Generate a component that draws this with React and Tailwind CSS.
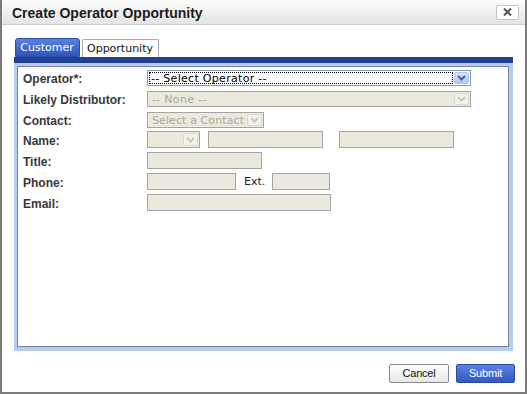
import React from "react";

function Chevron({ color = "#4a5f8a", w = 9, h = 6, sw = 2 }) {
  return (
    <svg width={w} height={h} viewBox="0 0 9 6">
      <path d="M1 1 L4.5 4.5 L8 1" fill="none" stroke={color} strokeWidth={sw} />
    </svg>
  );
}

function DisabledSelect({ width, text, track }) {
  return (
    <div className={`${width} h-[16px] border border-[#a5a5a5] bg-[#ebe9dd] flex items-stretch p-[1px]`}>
      <div className={`flex-1 flex items-center pl-[3px] text-[11px] leading-none ${track} text-[#aca899] font-['DejaVu_Sans',sans-serif] whitespace-nowrap overflow-hidden`}>
        {text}
      </div>
      <div className="w-[15px] ml-[1px] bg-[#f2f1ea] border border-[#dcdad0] rounded-[2px] flex items-center justify-center">
        <Chevron color="#c9c7bd" />
      </div>
    </div>
  );
}

function Input({ width }) {
  return <div className={`${width} h-[17px] border border-[#a5a5a5] bg-[#ebe9dd]`} />;
}

function Label({ children }) {
  return (
    <div className="w-[124px] shrink-0 pt-[2px] text-[12px] font-bold text-[#383838] font-['Liberation_Sans',sans-serif] leading-none">
      {children}
    </div>
  );
}

export default function App() {
  return (
    <div className="w-[527px] h-[394px] bg-white border-x-2 border-b-2 border-[#7b7b7b] flex flex-col font-['Liberation_Sans',sans-serif] overflow-hidden">
      {/* Title bar */}
      <div className="h-[25px] shrink-0 flex items-center justify-between border-b border-[#cdcdcd] bg-gradient-to-b from-[#fdfdfd] to-[#e4e4e4]">
        <span className="pl-[10px] pt-[1px] text-[14px] font-bold text-[#1c1c1c] leading-none">
          Create Operator Opportunity
        </span>
        <div className="mr-[6px] w-[23px] h-[15px] bg-white border border-[#c4c4c4] rounded-[2px] flex items-center justify-center">
          <svg width="9" height="8" viewBox="0 0 9 8">
            <path d="M1 0.5 L8 7.5 M8 0.5 L1 7.5" stroke="#555" strokeWidth="2" />
          </svg>
        </div>
      </div>

      {/* Tabs + panel */}
      <div className="px-[12px] pt-[13px] shrink-0">
        <div className="h-[19px] flex items-end gap-[2px] pl-[0.5px]">
          <div className="h-[19px] w-[65px] rounded-t-[3px] border border-[#2b4ca6] bg-gradient-to-b from-[#5a82db] to-[#2f55bc] flex items-center justify-center text-[11px] leading-none text-white font-['DejaVu_Sans',sans-serif]">
            Customer
          </div>
          <div className="h-[18px] w-[77px] rounded-t-[2px] border border-b-0 border-[#a9a9a9] bg-white flex items-center justify-center text-[11px] leading-none text-[#111] font-['DejaVu_Sans',sans-serif]">
            Opportunity
          </div>
        </div>
        <div className="h-[6px] bg-[#213f97]" />
        <div className="bg-[#b6ccf3] pl-[3px] pr-[4px] pt-[3px] pb-[4px]">
          <div className="h-[281px] border border-[#7c8591] bg-white pl-[5px] pt-[3px] flex flex-col">
            {/* Operator */}
            <div className="flex items-center h-[16px]">
              <Label>Operator*:</Label>
              <div className="w-[324px] h-[16px] border border-[#7f9db9] bg-white flex items-stretch p-[1px]">
                <div className="flex-1 border border-dotted border-black flex items-center pl-[1px] text-[11px] leading-none tracking-[0.3px] text-black font-['DejaVu_Sans',sans-serif] whitespace-nowrap">
                  -- Select Operator --
                </div>
                <div className="w-[15px] ml-[1px] bg-gradient-to-b from-[#d9e4fc] to-[#b2c6f3] border border-[#b4c6ee] rounded-[2px] flex items-center justify-center">
                  <Chevron color="#4b5f8c" />
                </div>
              </div>
            </div>
            {/* Likely Distributor */}
            <div className="flex items-center h-[16px] mt-[5px]">
              <Label>Likely Distributor:</Label>
              <DisabledSelect width="w-[324px]" text="-- None --" track="tracking-[0.3px]" />
            </div>
            {/* Contact */}
            <div className="flex items-center h-[16px] mt-[5px]">
              <Label>Contact:</Label>
              <DisabledSelect width="w-[117px]" text="Select a Contact" track="tracking-[0.1px]" />
            </div>
            {/* Name */}
            <div className="flex items-center h-[17px] mt-[3px]">
              <Label>Name:</Label>
              <div className="w-[53px] h-[17px] border border-[#a5a5a5] bg-[#ebe9dd] flex items-stretch justify-end p-[1px]">
                <div className="w-[15px] bg-[#f2f1ea] border border-[#dcdad0] rounded-[2px] flex items-center justify-center">
                  <Chevron color="#c9c7bd" />
                </div>
              </div>
              <div className="ml-[8px]">
                <Input width="w-[115px]" />
              </div>
              <div className="ml-[16px]">
                <Input width="w-[115px]" />
              </div>
            </div>
            {/* Title */}
            <div className="flex items-center h-[17px] mt-[4px]">
              <Label>Title:</Label>
              <Input width="w-[115px]" />
            </div>
            {/* Phone */}
            <div className="flex items-center h-[17px] mt-[4px]">
              <Label>Phone:</Label>
              <Input width="w-[89px]" />
              <span className="ml-[8px] w-[28px] text-[11px] leading-none text-[#222] font-['DejaVu_Sans',sans-serif]">
                Ext.
              </span>
              <Input width="w-[58px]" />
            </div>
            {/* Email */}
            <div className="flex items-center h-[17px] mt-[4px]">
              <Label>Email:</Label>
              <Input width="w-[184px]" />
            </div>
          </div>
        </div>
      </div>

      {/* Buttons */}
      <div className="flex justify-end gap-[7px] pr-[10px] pt-[13px]">
        <button className="w-[60px] h-[19px] rounded-[2px] border border-[#8a8a8a] bg-gradient-to-b from-white to-[#e6e6e6] text-[11px] leading-none text-[#111] tracking-[-0.2px]">
          Cancel
        </button>
        <button className="w-[59px] h-[19px] rounded-[2px] border border-[#2a4aa6] bg-gradient-to-b from-[#5b82de] to-[#3159c2] text-[11px] leading-none text-white tracking-[-0.2px]">
          Submit
        </button>
      </div>
    </div>
  );
}
